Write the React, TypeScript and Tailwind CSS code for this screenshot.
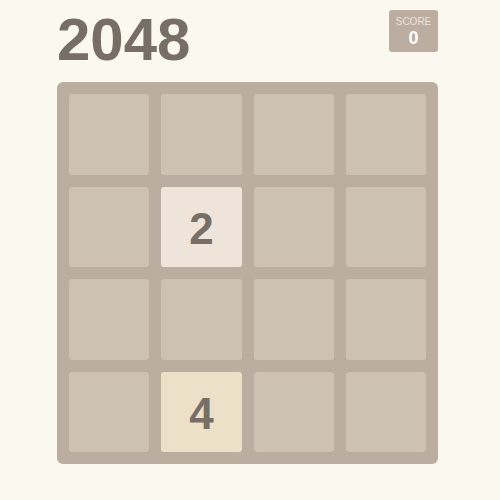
import React from 'react';

const board: number[][] = [
  [0, 0, 0, 0],
  [0, 2, 0, 0],
  [0, 0, 0, 0],
  [0, 4, 0, 0],
];

const tileStyle: Record<number, string> = {
  0: 'bg-[#cdc1b4]',
  2: 'bg-[#eee4da] text-[#776e65]',
  4: 'bg-[#ede0c8] text-[#776e65]',
};

export default function App() {
  return (
    <div className="min-h-screen bg-[#faf8ef] font-['Liberation_Sans',Arial,sans-serif]">
      <div className="ml-[57px] w-[381px] pt-[10px]">
        {/* Header */}
        <div className="flex items-start justify-between h-[72px]">
          <h1 className="text-[60px] leading-[60px] font-bold text-[#776e65]">2048</h1>
          <div className="w-[49px] h-[42px] rounded-[3px] bg-[#bbada0] flex flex-col items-center pt-[6px]">
            <span className="text-[10px] leading-[12px] text-[#eee4da]">SCORE</span>
            <span className="text-[18px] leading-[20px] font-bold text-white">0</span>
          </div>
        </div>

        {/* Board */}
        <div className="bg-[#bbada0] rounded-[6px] p-[12px] grid grid-cols-4 gap-[12px]">
          {board.flat().map((v, i) => (
            <div
              key={i}
              className={`h-[80.5px] rounded-[3px] flex items-center justify-center pt-[4px] text-[44px] leading-none font-bold ${tileStyle[v]}`}
            >
              {v > 0 ? v : ''}
            </div>
          ))}
        </div>
      </div>
    </div>
  );
}
